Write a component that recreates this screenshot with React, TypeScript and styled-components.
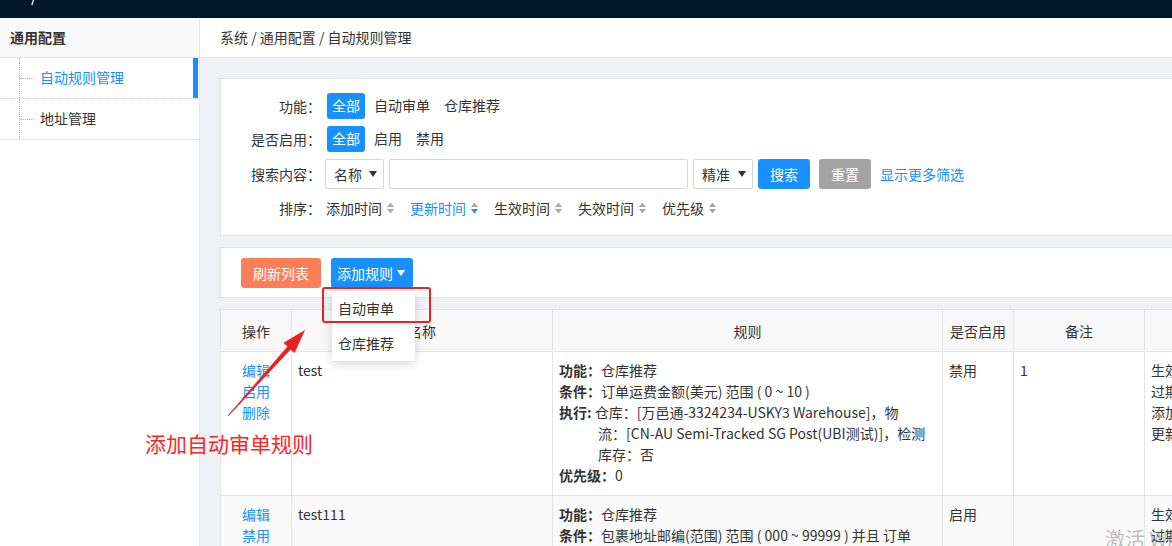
import React from 'react';
import styled, { createGlobalStyle, css } from 'styled-components';

const GlobalStyle = createGlobalStyle`
  html, body { margin: 0; padding: 0; height: 100%; overflow: hidden; background: #fff; }
  body {
    font-family: "Noto Sans CJK SC", "Noto Sans", "Liberation Sans", sans-serif;
    font-size: 14px;
    color: #333;
  }
  #root { height: 100%; }
  * { box-sizing: border-box; }
`;

const BLUE = '#1890ff';
const BORDER = '#e4e4e4';

const Page = styled.div`
  position: relative;
  width: 1172px;
  height: 546px;
  display: flex;
  flex-direction: column;
  overflow: hidden;
`;

const TopBar = styled.header`
  height: 18px;
  flex: none;
  background: #00172b;
  display: flex;
  padding-left: 29px;
`;

const Layout = styled.div`
  flex: 1;
  display: flex;
  min-height: 0;
`;

const Sidebar = styled.aside`
  width: 200px;
  flex: none;
  background: #fff;
  border-right: 1px solid #e6e6e6;
  display: flex;
  flex-direction: column;
`;

const SideHeader = styled.div`
  height: 40px;
  flex: none;
  padding: 0 0 2px 10px;
  display: flex;
  align-items: center;
  font-weight: 700;
  background: #f9f9f9;
  border-bottom: 1px solid #e6e6e6;
`;

const MenuItem = styled.div<{ $active?: boolean; $last?: boolean }>`
  height: 41px;
  display: flex;
  align-items: stretch;
  padding-left: 19px;
  color: ${(p) => (p.$active ? BLUE : '#333')};
  border-bottom: ${(p) => (p.$last ? '1px solid #e6e6e6' : '1px dotted #c9d3de')};
  box-shadow: ${(p) => (p.$active ? `inset -5px 0 0 ${BLUE}` : 'none')};
  margin-right: ${(p) => (p.$active ? '1px' : '0')};
`;

const TreeGuide = styled.span`
  width: 21px;
  flex: none;
  border-left: 1px dotted #9fb4cc;
  display: flex;
  align-items: center;
  &::after {
    content: '';
    width: 14px;
    border-top: 1px dotted #9fb4cc;
  }
`;

const MenuText = styled.span`
  display: flex;
  align-items: center;
  padding-bottom: 2px;
`;

const Main = styled.main`
  flex: 1;
  min-width: 0;
  display: flex;
  flex-direction: column;
  background: #f0f1f5;
  overflow: hidden;
`;

const Breadcrumb = styled.div`
  height: 40px;
  flex: none;
  background: #fff;
  border-bottom: 1px solid ${BORDER};
  padding: 0 0 2px 20px;
  display: flex;
  align-items: center;
  color: #333;
  white-space: nowrap;
`;

const Content = styled.div`
  flex: 1;
  padding: 20px 0 0 20px;
  display: flex;
  flex-direction: column;
  gap: 11px;
`;

const Card = styled.section`
  width: 1200px;
  flex: none;
  background: #fff;
  border: 1px solid #e2e2e2;
`;

const FilterCard = styled(Card)`
  padding: 14px 0 15px;
  display: flex;
  flex-direction: column;
  gap: 7px;
`;

const FilterRow = styled.div<{ $h: number }>`
  height: ${(p) => p.$h}px;
  display: flex;
  align-items: center;
  white-space: nowrap;
`;

const FilterLabel = styled.span`
  width: 100px;
  flex: none;
  text-align: right;
  margin-right: 4px;
  padding-bottom: 1px;
`;

const OptionGroup = styled.div`
  display: flex;
  gap: 4px;
  padding-left: 2px;
`;

const Option = styled.span<{ $active?: boolean }>`
  height: 26px;
  line-height: 25px;
  padding: 0 5px;
  border-radius: 3px;
  ${(p) =>
    p.$active &&
    css`
      background: ${BLUE};
      color: #fff;
    `}
`;

const Controls = styled.div`
  display: flex;
  align-items: center;
`;

const Select = styled.div<{ $w: number }>`
  width: ${(p) => p.$w}px;
  height: 30px;
  border: 1px solid #d6d6d6;
  border-radius: 2px;
  padding: 0 6px 0 8px;
  display: flex;
  align-items: center;
  justify-content: space-between;
  margin-right: 5px;
  background: #fff;
`;

const TextInput = styled.input`
  width: 299px;
  height: 30px;
  border: 1px solid #d6d6d6;
  border-radius: 2px;
  margin: 0 5px 0 0;
  outline: none;
  font: inherit;
`;

const Button = styled.button<{ $variant: 'primary' | 'gray' | 'orange' }>`
  height: 30px;
  padding: 0 12px;
  border: none;
  border-radius: 3px;
  color: #fff;
  font: inherit;
  font-size: 14px;
  display: inline-flex;
  align-items: center;
  gap: 4px;
  cursor: pointer;
  background: ${(p) =>
    p.$variant === 'primary' ? BLUE : p.$variant === 'gray' ? '#a3a3a3' : '#fd7f59'};
`;

const DropButton = styled(Button)`
  padding: 0 8px 0 6px;
`;

const LinkText = styled.a`
  color: ${BLUE};
  margin-left: 9px;
  text-decoration: none;
  cursor: pointer;
`;

const SortGroup = styled.div`
  display: flex;
  align-items: center;
  padding-left: 1px;
`;

const SortItem = styled.span<{ $active?: boolean }>`
  display: inline-flex;
  align-items: center;
  gap: 5px;
  margin-right: 16px;
  color: ${(p) => (p.$active ? BLUE : '#333')};
`;

const Toolbar = styled(Card)`
  padding: 10px 20px 9px;
  display: flex;
  gap: 10px;
`;

const DropWrap = styled.div`
  position: relative;
`;

const DropMenu = styled.ul`
  position: absolute;
  top: calc(100% + 2px);
  left: 1px;
  width: 83px;
  margin: 0;
  padding: 0;
  list-style: none;
  background: #fff;
  border-top: 1px solid #e8e8e8;
  box-shadow: 0 3px 10px rgba(0, 0, 0, 0.16);
  z-index: 5;
`;

const DropItem = styled.li`
  height: 35px;
  line-height: 34px;
  padding-left: 6px;
  color: #333;
  white-space: nowrap;
`;

const Table = styled.table`
  width: 1200px;
  flex: none;
  border-collapse: collapse;
  table-layout: fixed;
  background: #fff;
  border: 1px solid ${BORDER};
`;

const Th = styled.th`
  height: 42px;
  padding: 0 6px;
  font-weight: 400;
  text-align: center;
  background: #f8f8f8;
  border: 1px solid ${BORDER};
  white-space: nowrap;
`;

const Tr = styled.tr<{ $striped?: boolean }>`
  background: ${(p) => (p.$striped ? '#fafafa' : '#fff')};
`;

const Td = styled.td<{ $center?: boolean }>`
  padding: 8px 6px 9px;
  vertical-align: top;
  line-height: 21px;
  border: 1px solid ${BORDER};
  text-align: ${(p) => (p.$center ? 'center' : 'left')};
  white-space: nowrap;
  overflow: hidden;
`;

const ActionLink = styled.a`
  display: block;
  color: ${BLUE};
  text-decoration: none;
  cursor: pointer;
`;

const RuleLine = styled.div<{ $hang?: number }>`
  padding-left: ${(p) => p.$hang || 0}px;
  text-indent: -${(p) => p.$hang || 0}px;
`;

const RuleLabel = styled.b`
  font-weight: 700;
`;

const Overlay = styled.div`
  position: absolute;
  inset: 0;
  pointer-events: none;
  z-index: 20;
`;

const Highlight = styled.div`
  position: absolute;
  left: 322px;
  top: 287px;
  width: 109px;
  height: 36px;
  border: 2.5px solid #f02020;
  border-radius: 3px;
`;

const Note = styled.div`
  position: absolute;
  left: 145px;
  top: 433px;
  font-size: 21px;
  line-height: 1;
  color: #ff2424;
  white-space: nowrap;
`;

const ArrowSvg = styled.svg`
  position: absolute;
  left: 0;
  top: 0;
`;

const Watermark = styled.div`
  position: absolute;
  left: 1105px;
  top: 529px;
  font-size: 20px;
  line-height: 1;
  color: rgba(110, 110, 110, 0.45);
  white-space: nowrap;
`;

const Caret = ({ color = '#333' }: { color?: string }) => (
  <svg width="8" height="6" viewBox="0 0 8 6">
    <polygon points="0,0 8,0 4,6" fill={color} />
  </svg>
);

const SortIcon = ({ active }: { active?: boolean }) => (
  <svg width="7" height="12" viewBox="0 0 7 12">
    <polygon points="0,5 3.5,0.5 7,5" fill="#a8a8a8" />
    <polygon points="0,7 3.5,11.5 7,7" fill={active ? BLUE : '#a8a8a8'} />
  </svg>
);

const sorts = [
  { label: '添加时间' },
  { label: '更新时间', active: true },
  { label: '生效时间' },
  { label: '失效时间' },
  { label: '优先级' },
];

export default function App() {
  return (
    <>
      <GlobalStyle />
      <Page>
        <TopBar>
          <svg width="8" height="6" viewBox="0 0 8 6">
            <path d="M4.5 0 L2.8 5" stroke="#dfe6ee" strokeWidth="1.4" />
          </svg>
        </TopBar>
        <Layout>
          <Sidebar>
            <SideHeader>通用配置</SideHeader>
            <MenuItem $active>
              <TreeGuide />
              <MenuText>自动规则管理</MenuText>
            </MenuItem>
            <MenuItem $last>
              <TreeGuide />
              <MenuText>地址管理</MenuText>
            </MenuItem>
          </Sidebar>
          <Main>
            <Breadcrumb>系统 / 通用配置 / 自动规则管理</Breadcrumb>
            <Content>
              <FilterCard>
                <FilterRow $h={26}>
                  <FilterLabel>功能：</FilterLabel>
                  <OptionGroup>
                    <Option $active>全部</Option>
                    <Option>自动审单</Option>
                    <Option>仓库推荐</Option>
                  </OptionGroup>
                </FilterRow>
                <FilterRow $h={26}>
                  <FilterLabel>是否启用：</FilterLabel>
                  <OptionGroup>
                    <Option $active>全部</Option>
                    <Option>启用</Option>
                    <Option>禁用</Option>
                  </OptionGroup>
                </FilterRow>
                <FilterRow $h={30}>
                  <FilterLabel>搜索内容：</FilterLabel>
                  <Controls>
                    <Select $w={59}>
                      <span>名称</span>
                      <Caret />
                    </Select>
                    <TextInput />
                    <Select $w={60}>
                      <span>精准</span>
                      <Caret />
                    </Select>
                    <Button $variant="primary">搜索</Button>
                    <Button $variant="gray" style={{ marginLeft: 9 }}>
                      重置
                    </Button>
                    <LinkText>显示更多筛选</LinkText>
                  </Controls>
                </FilterRow>
                <FilterRow $h={24}>
                  <FilterLabel>排序：</FilterLabel>
                  <SortGroup>
                    {sorts.map((s) => (
                      <SortItem key={s.label} $active={s.active}>
                        {s.label}
                        <SortIcon active={s.active} />
                      </SortItem>
                    ))}
                  </SortGroup>
                </FilterRow>
              </FilterCard>

              <Toolbar>
                <Button $variant="orange">刷新列表</Button>
                <DropWrap>
                  <DropButton $variant="primary">
                    添加规则
                    <Caret color="#fff" />
                  </DropButton>
                  <DropMenu>
                    <DropItem>自动审单</DropItem>
                    <DropItem>仓库推荐</DropItem>
                  </DropMenu>
                </DropWrap>
              </Toolbar>

              <Table>
                <colgroup>
                  <col style={{ width: 71 }} />
                  <col style={{ width: 261 }} />
                  <col style={{ width: 390 }} />
                  <col style={{ width: 71 }} />
                  <col style={{ width: 131 }} />
                  <col style={{ width: 276 }} />
                </colgroup>
                <thead>
                  <tr>
                    <Th>操作</Th>
                    <Th>名称</Th>
                    <Th>规则</Th>
                    <Th>是否启用</Th>
                    <Th>备注</Th>
                    <Th>时间</Th>
                  </tr>
                </thead>
                <tbody>
                  <Tr>
                    <Td $center>
                      <ActionLink>编辑</ActionLink>
                      <ActionLink>启用</ActionLink>
                      <ActionLink>删除</ActionLink>
                    </Td>
                    <Td>test</Td>
                    <Td>
                      <RuleLine>
                        <RuleLabel>功能：</RuleLabel>仓库推荐
                      </RuleLine>
                      <RuleLine>
                        <RuleLabel>条件：</RuleLabel>订单运费金额(美元) 范围 ( 0 ~ 10 )
                      </RuleLine>
                      <RuleLine $hang={39}>
                        <RuleLabel>执行:</RuleLabel> 仓库：[万邑通-3324234-USKY3 Warehouse]，物
                        <br />
                        流：[CN-AU Semi-Tracked SG Post(UBI测试)]，检测
                        <br />
                        库存：否
                      </RuleLine>
                      <RuleLine>
                        <RuleLabel>优先级：</RuleLabel>0
                      </RuleLine>
                    </Td>
                    <Td>禁用</Td>
                    <Td>1</Td>
                    <Td>
                      生效时间：2020-05-20 00:00:00
                      <br />
                      过期时间：2020-06-20 00:00:00
                      <br />
                      添加时间：2020-05-20 10:12:33
                      <br />
                      更新时间：2020-05-21 09:41:08
                    </Td>
                  </Tr>
                  <Tr $striped>
                    <Td $center>
                      <ActionLink>编辑</ActionLink>
                      <ActionLink>禁用</ActionLink>
                      <ActionLink>删除</ActionLink>
                    </Td>
                    <Td>test111</Td>
                    <Td>
                      <RuleLine>
                        <RuleLabel>功能：</RuleLabel>仓库推荐
                      </RuleLine>
                      <RuleLine>
                        <RuleLabel>条件：</RuleLabel>包裹地址邮编(范围) 范围 ( 000 ~ 99999 ) 并且 订单
                      </RuleLine>
                      <RuleLine>
                        <RuleLabel>优先级：</RuleLabel>0
                      </RuleLine>
                    </Td>
                    <Td>启用</Td>
                    <Td></Td>
                    <Td>
                      生效时间：2020-05-20 00:00:00
                      <br />
                      过期时间：2020-06-20 00:00:00
                    </Td>
                  </Tr>
                </tbody>
              </Table>
            </Content>
          </Main>
        </Layout>

        <Overlay>
          <Highlight />
          <ArrowSvg width="1172" height="546" viewBox="0 0 1172 546">
            <polygon
              points="228.4,416.3 290.6,349.4 294.5,353 305,330 283.5,342.8 287.4,346.4 227.6,415.7"
              fill="#ee1f1f"
            />
          </ArrowSvg>
          <Note>添加自动审单规则</Note>
          <Watermark>激活 Windows</Watermark>
        </Overlay>
      </Page>
    </>
  );
}
